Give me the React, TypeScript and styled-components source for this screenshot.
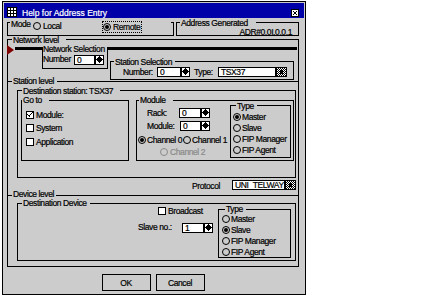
import React from "react";
import styled, { createGlobalStyle } from "styled-components";

const face = "#cccccc";
const ink = "#000000";
const navy = "#0000a8";
const dimmed = "#8a8a8a";
const marker = "#800000";
const uiFont = `"Liberation Sans", Arial, sans-serif`;

const GlobalStyle = createGlobalStyle`
  html, body { margin: 0; padding: 0; background: #ffffff; }
  body {
    font-family: ${uiFont};
    font-size: 8.5px;
    line-height: 10px;
    letter-spacing: -0.4px;
    color: ${ink};
    -webkit-text-stroke: 0.2px currentColor;
  }
  *, *::before, *::after { box-sizing: border-box; }
`;

const Dialog = styled.div`
  margin: 1px 0 0 2px;
  width: 304px;
  height: 294px;
  border: 1px solid ${ink};
  padding: 1px;
  background: ${face};
  display: flex;
  flex-direction: column;
`;

const TitleBar = styled.div`
  flex: none;
  height: 15px;
  display: flex;
  align-items: flex-end;
  padding: 0 5px 0 3px;
  background: ${navy};
  color: #ffffff;
  svg { margin-bottom: 1px; flex: none; }
`;

const TitleText = styled.span`
  flex: 1;
  margin-left: 5px;
  font-size: 8.5px;
  letter-spacing: 0;
  line-height: 10px;
  white-space: nowrap;
`;

const Body = styled.div`
  flex: 1;
  display: flex;
  flex-direction: column;
  padding: 0 5px 0 3px;
`;

const TopRow = styled.div`
  display: flex;
  gap: 2px;
  margin-top: 4px;
`;

interface GroupProps {
  $w?: number;
  $h: number;
  $mt?: number;
  $ml?: number;
  $mr?: number;
  $heavy?: boolean;
}
const Group = styled.div<GroupProps>`
  flex: none;
  display: flex;
  flex-direction: column;
  width: ${p => (p.$w ? `${p.$w}px` : "auto")};
  height: ${p => p.$h}px;
  margin: ${p => p.$mt ?? 0}px ${p => p.$mr ?? 0}px 0 ${p => p.$ml ?? 0}px;
  border: 1px solid ${ink};
  border-top-width: ${p => (p.$heavy ? 3 : 1)}px;
`;

interface CaptionProps {
  $mt?: number;
  $ml?: number;
  $pl?: number;
  $pr?: number;
}
const Caption = styled.div<CaptionProps>`
  align-self: flex-start;
  height: 9px;
  line-height: 9px;
  margin: ${p => p.$mt ?? -5}px 0 0 ${p => p.$ml ?? 3}px;
  padding: 0 ${p => p.$pr ?? 3}px 0 ${p => p.$pl ?? 1}px;
  background: ${face};
  white-space: nowrap;
`;

const ModeHeader = styled.div`
  display: flex;
  align-items: flex-start;
  height: 13px;
  margin: -4px 2px 0 2px;
  padding-left: 1px;
  background: ${face};
`;

const ModeLabel = styled.span`
  flex: none;
  width: 22px;
`;

const AddressValue = styled.div`
  margin-top: -1px;
  padding-right: 6px;
  text-align: right;
  white-space: nowrap;
`;

const Levels = styled.div`
  display: flex;
  flex-direction: column;
  margin-top: 3px;
  width: 292px;
`;

const Level = styled.div<{ $h: number; $closed?: boolean }>`
  display: flex;
  flex-direction: column;
  height: ${p => p.$h}px;
  border: 1px solid ${ink};
  border-bottom: ${p => (p.$closed ? `1px solid ${ink}` : "none")};
`;

const NetRow = styled.div`
  display: flex;
  align-items: flex-start;
`;

const Marker = styled.span`
  flex: none;
  width: 0;
  height: 0;
  margin-left: -1px;
  border-top: 5px solid transparent;
  border-bottom: 5px solid transparent;
  border-left: 7px solid ${marker};
`;

const Bar = styled.div<{ $w?: number; $ml?: number; $mr?: number }>`
  flex: none;
  width: ${p => (p.$w ? `${p.$w}px` : "auto")};
  height: 3px;
  margin: 2px ${p => p.$mr ?? 0}px 0 ${p => p.$ml ?? 0}px;
  background: ${ink};
`;

const RightColumn = styled.div`
  flex: 1;
  display: flex;
  flex-direction: column;
`;

const Row = styled.div<{ $mt?: number; $pl?: number }>`
  display: flex;
  align-items: flex-start;
  margin-top: ${p => p.$mt ?? 0}px;
  padding-left: ${p => p.$pl ?? 0}px;
`;

const Label = styled.span<{ $w?: number; $mt?: number; $ml?: number }>`
  flex: none;
  width: ${p => (p.$w ? `${p.$w}px` : "auto")};
  margin-top: ${p => p.$mt ?? 0}px;
  margin-left: ${p => p.$ml ?? 0}px;
  white-space: nowrap;
`;

const Field = styled.div<{ $w: number; $mt?: number }>`
  flex: none;
  display: flex;
  width: ${p => p.$w}px;
  height: 10px;
  margin-top: ${p => p.$mt ?? 0}px;
  svg { flex: none; }
`;

const FieldText = styled.div`
  flex: 1;
  height: 10px;
  border: 1px solid ${ink};
  background: #ffffff;
  padding-left: 2px;
  line-height: 8px;
  overflow: hidden;
  white-space: nowrap;
`;

const DestRow = styled.div`
  display: flex;
  align-items: flex-start;
  margin-left: 3px;
`;

const CheckRow = styled.div<{ $mt?: number; $pl?: number }>`
  display: flex;
  align-items: flex-start;
  gap: 2px;
  margin-top: ${p => p.$mt ?? 0}px;
  padding-left: ${p => p.$pl ?? 4}px;
  white-space: nowrap;
`;

const CheckBox = styled.span`
  flex: none;
  display: flex;
  width: 8px;
  height: 8px;
  margin-top: 1px;
  border: 1px solid ${ink};
  background: #ffffff;
`;

const Column = styled.div<{ $w?: number }>`
  flex: ${p => (p.$w ? "none" : "1")};
  width: ${p => (p.$w ? `${p.$w}px` : "auto")};
  display: flex;
  flex-direction: column;
`;

const Option = styled.div<{ $w?: number; $mt?: number; $gap?: number; $dim?: boolean }>`
  flex: none;
  display: flex;
  align-items: flex-start;
  gap: ${p => p.$gap ?? 1}px;
  width: ${p => (p.$w ? `${p.$w}px` : "auto")};
  margin-top: ${p => p.$mt ?? 0}px;
  color: ${p => (p.$dim ? dimmed : ink)};
  white-space: nowrap;
`;

const FocusOption = styled(Option)`
  height: 12px;
  padding-right: 1px;
  border: 1px dotted ${ink};
`;

const Radio = styled.span<{ $on?: boolean; $dim?: boolean }>`
  flex: none;
  position: relative;
  width: 8px;
  height: 8px;
  margin-top: 1px;
  border: 1px solid ${p => (p.$dim ? dimmed : ink)};
  border-radius: 50%;
  &::after {
    content: "";
    display: ${p => (p.$on ? "block" : "none")};
    position: absolute;
    left: 1px;
    top: 1px;
    width: 4px;
    height: 4px;
    border-radius: 50%;
    background: ${ink};
  }
`;

const RadioList = styled.div<{ $mt?: number; $pl?: number }>`
  display: flex;
  flex-direction: column;
  gap: 1px;
  margin-top: ${p => p.$mt ?? 0}px;
  padding-left: ${p => p.$pl ?? 2}px;
`;

const ProtocolRow = styled.div`
  display: flex;
  justify-content: flex-end;
  align-items: flex-start;
  gap: 12px;
  margin: 2px 2px 0 0;
`;

const ButtonRow = styled.div`
  display: flex;
  justify-content: center;
  gap: 5px;
  margin-top: 7px;
`;

const Button = styled.button`
  width: 49px;
  height: 17px;
  padding: 0;
  border: 1px solid ${ink};
  background: ${face};
  font: inherit;
  letter-spacing: inherit;
  color: ${ink};
`;

const TitleIcon = () => (
  <svg width="10" height="10" viewBox="0 0 10 10" shapeRendering="crispEdges">
    <rect width="10" height="10" fill="#ffffff" />
    {[0, 3, 6, 9].map(n => (
      <g key={n}>
        <rect x={n} y="0" width="1" height="10" fill="#000" />
        <rect x="0" y={n} width="10" height="1" fill="#000" />
      </g>
    ))}
  </svg>
);

const CloseIcon = () => (
  <svg width="8" height="8" viewBox="0 0 8 8" shapeRendering="crispEdges">
    <rect x="0.5" y="0.5" width="7" height="7" fill="#ffffff" stroke="#000" />
    <path d="M2 2h1v1H2zM3 3h1v1H3zM4 4h1v1H4zM5 5h1v1H5zM5 2h1v1H5zM4 3h1v1H4zM3 4h1v1H3zM2 5h1v1H2z" fill="#000" />
  </svg>
);

const SpinIcon = () => (
  <svg width="9" height="10" viewBox="0 0 9 10" shapeRendering="crispEdges">
    <rect x="0.5" y="0.5" width="8" height="9" fill="#ffffff" stroke="#000" />
    <rect x="0" y="4" width="9" height="1" fill="#000" />
    <path d="M4 1h1v1H4zM3 2h3v1H3zM2 3h5v1H2z" fill="#000" />
    <path d="M2 5h5v1H2zM3 6h3v1H3zM4 7h1v1H4z" fill="#000" />
  </svg>
);

const DropIcon = () => {
  const dots: React.ReactNode[] = [];
  for (let y = 1; y < 9; y++) {
    for (let x = 1; x < 10; x++) {
      if ((x + y) % 2 === 0) dots.push(<rect key={`${x}-${y}`} x={x} y={y} width="1" height="1" fill="#fff" />);
    }
  }
  return (
    <svg width="11" height="10" viewBox="0 0 11 10" shapeRendering="crispEdges">
      <rect width="11" height="10" fill="#000" />
      {dots}
      <rect x="4" y="3" width="3" height="4" fill="#000" />
    </svg>
  );
};

const CheckMark = () => (
  <svg width="6" height="6" viewBox="0 0 6 6" shapeRendering="crispEdges">
    <path d="M5 0h1v1H5zM4 1h1v1H4zM3 2h1v1H3zM0 2h1v1H0zM1 3h1v1H1zM2 3h1v1H2zM2 4h1v1H2z" fill="#000" />
  </svg>
);

const SpinField = ({ w, value, mt }: { w: number; value: string; mt?: number }) => (
  <Field $w={w} $mt={mt}>
    <FieldText>{value}</FieldText>
    <SpinIcon />
  </Field>
);

const DropField = ({ w, value, mt }: { w: number; value: string; mt?: number }) => (
  <Field $w={w} $mt={mt}>
    <FieldText>{value}</FieldText>
    <DropIcon />
  </Field>
);

const Check = ({ label, checked, mt, pl }: { label: string; checked?: boolean; mt?: number; pl?: number }) => (
  <CheckRow $mt={mt} $pl={pl}>
    <CheckBox>{checked && <CheckMark />}</CheckBox>
    <span>{label}</span>
  </CheckRow>
);

const TypeChoices = ({ selected }: { selected: string }) => (
  <>
    {["Master", "Slave", "FIP Manager", "FIP Agent"].map(t => (
      <Option key={t} $gap={1}>
        <Radio $on={t === selected} />
        <span>{t}</span>
      </Option>
    ))}
  </>
);

export default function App() {
  return (
    <>
      <GlobalStyle />
      <Dialog>
        <TitleBar>
          <TitleIcon />
          <TitleText>Help for Address Entry</TitleText>
          <CloseIcon />
        </TitleBar>
        <Body>
          <TopRow>
            <Group $w={167} $h={14}>
              <ModeHeader>
                <ModeLabel>Mode</ModeLabel>
                <Option $w={69} $mt={2} $gap={2}>
                  <Radio />
                  <span>Local</span>
                </Option>
                <FocusOption $mt={2} $gap={2}>
                  <Radio $on />
                  <span>Remote</span>
                </FocusOption>
              </ModeHeader>
            </Group>
            <Group $w={123} $h={14}>
              <Caption $mt={-4} $ml={3} $pr={8}>Address Generated</Caption>
              <AddressValue>ADR#0.0I.0.0.1</AddressValue>
            </Group>
          </TopRow>

          <Levels>
            <Level $h={42}>
              <Caption $mt={-4} $ml={4} $pr={7}>Network level</Caption>
              <NetRow>
                <Marker />
                <Bar $w={27} $ml={1} />
                <Group $w={66} $h={22} $mt={2} $heavy>
                  <Caption $mt={-5} $ml={0} $pl={0} $pr={2}>Network Selection</Caption>
                  <Row>
                    <Label $w={31}>Number</Label>
                    <SpinField w={30} value="0" mt={1} />
                  </Row>
                </Group>
                <RightColumn>
                  <Bar $mr={1} />
                  <Group $h={19} $mt={11} $ml={2} $mr={4}>
                    <Caption $mt={-4} $ml={3}>Station Selection</Caption>
                    <Row $pl={12}>
                      <Label $w={34}>Number:</Label>
                      <SpinField w={33} value="0" />
                      <Label $w={24} $ml={4}>Type:</Label>
                      <DropField w={69} value="TSX37" />
                    </Row>
                  </Group>
                </RightColumn>
              </NetRow>
            </Level>

            <Level $h={114}>
              <Caption $mt={-5} $ml={4} $pr={3}>Station level</Caption>
              <Group $w={279} $h={88} $mt={4} $ml={9}>
                <Caption $mt={-4} $ml={4} $pr={7}>Destination station: TSX37</Caption>
                <DestRow>
                  <Group $w={108} $h={61} $mt={4}>
                    <Caption $mt={-5} $ml={0} $pr={7}>Go to</Caption>
                    <Check label="Module:" checked mt={5} />
                    <Check label="System" mt={3} />
                    <Check label="Application" mt={4} />
                  </Group>
                  <Group $w={158} $h={61} $mt={4} $ml={7}>
                    <Caption $mt={-5} $ml={2} $pr={8}>Module</Caption>
                    <Row>
                      <Column $w={93}>
                        <Row $mt={3} $pl={10}>
                          <Label $w={32}>Rack:</Label>
                          <SpinField w={31} value="0" />
                        </Row>
                        <Row $mt={3} $pl={10}>
                          <Label $w={33}>Module:</Label>
                          <SpinField w={30} value="0" />
                        </Row>
                        <Row $mt={4} $pl={1}>
                          <Option $w={45} $gap={1}>
                            <Radio $on />
                            <span>Channel 0</span>
                          </Option>
                          <Option $gap={1}>
                            <Radio />
                            <span>Channel 1</span>
                          </Option>
                        </Row>
                        <Row $mt={2} $pl={23}>
                          <Option $gap={2} $dim>
                            <Radio $dim />
                            <span>Channel 2</span>
                          </Option>
                        </Row>
                      </Column>
                      <Group $w={61} $h={53}>
                        <Caption $mt={-4} $ml={5}>Type</Caption>
                        <RadioList $mt={1} $pl={2}>
                          <TypeChoices selected="Master" />
                        </RadioList>
                      </Group>
                    </Row>
                  </Group>
                </DestRow>
              </Group>
              <ProtocolRow>
                <Label $mt={1}>Protocol</Label>
                <DropField w={64} value="UNI_TELWAY" />
              </ProtocolRow>
            </Level>

            <Level $h={72} $closed>
              <Caption $mt={-6} $ml={4} $pr={2}>Device level</Caption>
              <Group $w={279} $h={58} $mt={4} $ml={9}>
                <Caption $mt={-5} $ml={4}>Destination Device</Caption>
                <Row $mt={-2}>
                  <Column>
                    <Check label="Broadcast" pl={140} />
                    <Row $mt={6} $pl={120}>
                      <Label $w={44}>Slave no.:</Label>
                      <SpinField w={31} value="1" mt={1} />
                    </Row>
                  </Column>
                  <Group $w={73} $h={49} $mt={3} $mr={4}>
                    <Caption $mt={-5} $ml={6}>Type</Caption>
                    <RadioList $pl={3}>
                      <TypeChoices selected="Slave" />
                    </RadioList>
                  </Group>
                </Row>
              </Group>
            </Level>
          </Levels>

          <ButtonRow>
            <Button>OK</Button>
            <Button>Cancel</Button>
          </ButtonRow>
        </Body>
      </Dialog>
    </>
  );
}
